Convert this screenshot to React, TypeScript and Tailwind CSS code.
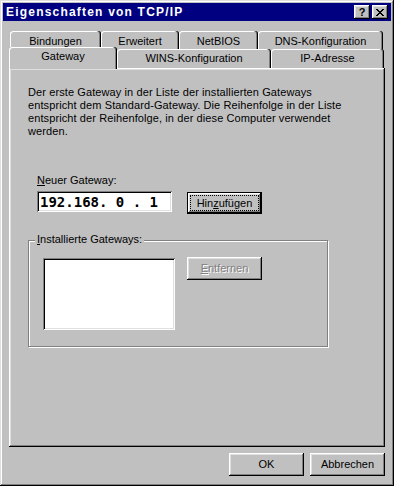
import React from "react";

const raised =
  "shadow-[inset_-1px_-1px_#000,inset_1px_1px_#fff,inset_-2px_-2px_#808080,inset_2px_2px_#dfdfdf]";
const sunken =
  "shadow-[inset_1px_1px_#808080,inset_-1px_-1px_#fff,inset_2px_2px_#000,inset_-2px_-2px_#dfdfdf]";
const tabEdge =
  "rounded-t-[3px] shadow-[inset_-1px_0_#000,inset_-2px_0_#808080,inset_1px_1px_#fff]";

type Tab = { label: string; w: string };

const backRow: Tab[] = [
  { label: "Bindungen", w: "w-[91px]" },
  { label: "Erweitert", w: "w-[78px]" },
  { label: "NetBIOS", w: "w-[79px]" },
  { label: "DNS-Konfiguration", w: "w-[125px]" },
];

const frontRow: Tab[] = [
  { label: "WINS-Konfiguration", w: "w-[154px]" },
  { label: "IP-Adresse", w: "w-[113px]" },
];

function Button({
  children,
  className = "",
  isDefault = false,
}: {
  children: React.ReactNode;
  className?: string;
  isDefault?: boolean;
}) {
  if (isDefault) {
    return (
      <div className={`w-[75px] h-[22px] border border-black ${className}`}>
        <div className={`w-full h-full ${raised} p-[2px]`}>
          <div className="w-full h-full border border-dotted border-black flex items-center justify-center leading-none">
            {children}
          </div>
        </div>
      </div>
    );
  }
  return (
    <div
      className={`w-[75px] h-[23px] ${raised} flex items-center justify-center leading-none ${className}`}
    >
      {children}
    </div>
  );
}

function CloseGlyph() {
  const rows = [
    "11000011",
    "01100110",
    "00111100",
    "00011000",
    "00111100",
    "01100110",
    "11000011",
  ];
  return (
    <svg width="8" height="7" viewBox="0 0 8 7" shapeRendering="crispEdges">
      {rows.map((r, y) =>
        r.split("").map((c, x) =>
          c === "1" ? <rect key={`${x}-${y}`} x={x} y={y} width="1" height="1" fill="#000" /> : null
        )
      )}
    </svg>
  );
}

export default function App() {
  return (
    <div className="w-[394px] h-[486px] bg-[#c0c0c0] p-[3px] flex flex-col font-['Liberation_Sans',Arial,sans-serif] text-[11px] text-black shadow-[inset_-1px_-1px_#000,inset_1px_1px_#dfdfdf,inset_-2px_-2px_#808080,inset_2px_2px_#fff]">
      {/* title bar */}
      <div className="h-[18px] bg-[#000080] flex items-center justify-between pl-[3px] pr-[3px]">
        <span className="text-white font-bold text-[12px] tracking-[1.2px] leading-none">Eigenschaften von TCP/IP</span>
        <div className="flex items-center gap-[2px]">
          <div className={`w-[16px] h-[14px] bg-[#c0c0c0] ${raised} flex items-center justify-center font-bold text-[11px] leading-none`}>
            ?
          </div>
          <div className={`w-[16px] h-[14px] bg-[#c0c0c0] ${raised} flex items-center justify-center`}>
            <CloseGlyph />
          </div>
        </div>
      </div>

      {/* back tab row */}
      <div className="flex mt-[10px] ml-[7px] h-[18px]">
        {backRow.map((t) => (
          <div key={t.label} className={`${t.w} h-[19px] ${tabEdge} flex justify-center pt-[4px] leading-[13px]`}>
            {t.label}
          </div>
        ))}
      </div>

      {/* front tab row */}
      <div className="flex ml-[6px] h-[19px]">
        <div className={`relative z-10 -top-[2px] w-[108px] h-[22px] bg-[#c0c0c0] ${tabEdge} flex justify-center pt-[3px] leading-[13px]`}>
          Gateway
        </div>
        {frontRow.map((t) => (
          <div key={t.label} className={`${t.w} h-[19px] ${tabEdge} flex justify-center pt-[3px] leading-[13px]`}>
            {t.label}
          </div>
        ))}
      </div>

      {/* panel */}
      <div className="ml-[6px] w-[376px] h-[379px] shadow-[inset_-1px_-1px_#000,inset_1px_1px_#fff,inset_-2px_-2px_#808080,inset_2px_2px_#dfdfdf] flex flex-col">
        <p className="pl-[19px] pt-[18px] leading-[13px] tracking-[0.1px]">
          Der erste Gateway in der Liste der installierten Gateways
          <br />
          entspricht dem Standard-Gateway. Die Reihenfolge in der Liste
          <br />
          entspricht der Reihenfolge, in der diese Computer verwendet
          <br />
          werden.
        </p>

        <div className="ml-[28px] mt-[36px] leading-[13px]">
          <span className="underline">N</span>euer Gateway:
        </div>

        <div className="flex items-start ml-[28px] mt-[4px]">
          <div className={`w-[135px] h-[21px] bg-white ${sunken} pl-[3px] flex items-center`}>
            <span className="whitespace-pre font-['DejaVu_Sans_Mono',monospace] font-bold text-[14px] leading-none">
              192.168. 0 . 1
            </span>
          </div>
          <Button isDefault className="ml-[15px] mt-px">
            Hin<span className="underline">z</span>ufügen
          </Button>
        </div>

        <div className="relative ml-[19px] mt-[26px] w-[300px] h-[107px] border border-[#808080] shadow-[inset_1px_1px_#fff,1px_1px_#fff]">
          <div className="absolute left-[6px] -top-[8px] px-[2px] bg-[#c0c0c0] leading-[13px]">
            <span className="underline">I</span>nstallierte Gateways:
          </div>
          <div className="flex items-start pl-[14px] pt-[16px]">
            <div className={`w-[132px] h-[72px] bg-white ${sunken} mt-px`} />
            <Button className="ml-[12px] text-[#808080] [text-shadow:1px_1px_#fff]">
              <span className="underline">E</span>ntfernen
            </Button>
          </div>
        </div>
      </div>

      {/* bottom buttons */}
      <div className="flex justify-end gap-[6px] mt-[6px] mr-[6px]">
        <Button>OK</Button>
        <Button>Abbrechen</Button>
      </div>
    </div>
  );
}
